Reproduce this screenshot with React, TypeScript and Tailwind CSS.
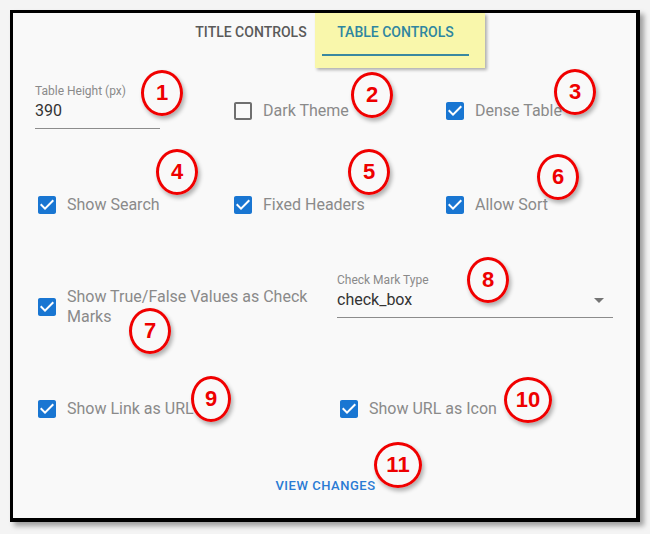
import React from "react";

const CHECKED =
  "M19 3H5c-1.11 0-2 .9-2 2v14c0 1.1.89 2 2 2h14c1.11 0 2-.9 2-2V5c0-1.1-.89-2-2-2zm-9 14l-5-5 1.41-1.41L10 14.17l7.59-7.59L19 8l-9 9z";
const UNCHECKED =
  "M19 5v14H5V5h14m0-2H5c-1.1 0-2 .9-2 2v14c0 1.1.9 2 2 2h14c1.1 0 2-.9 2-2V5c0-1.1-.9-2-2-2z";

function Box({ checked }: { checked: boolean }) {
  return (
    <svg width="24" height="24" viewBox="0 0 24 24" className="shrink-0">
      {checked && <rect x="5" y="5" width="14" height="14" fill="#ffffff" />}
      <path d={checked ? CHECKED : UNCHECKED} fill={checked ? "#1976d2" : "#6f6f6f"} />
    </svg>
  );
}

function Check({ label, checked = true, w }: { label: string; checked?: boolean; w: string }) {
  return (
    <div className={`flex items-center gap-[8px] ${w}`}>
      <Box checked={checked} />
      <span className="text-[16px] leading-[24px] text-[#8a8a8a]">{label}</span>
    </div>
  );
}

function Note({ n, x, y, w = 42 }: { n: string; x: number; y: number; w?: number }) {
  return (
    <div
      className="absolute flex items-center justify-center rounded-[50%] border-[3px] border-[#f00000] h-[46px] shadow-[2px_3px_4px_rgba(0,0,0,0.3)]"
      style={{ left: x - w / 2, top: y - 23, width: w }}
    >
      <span
        className="text-[22px] font-bold leading-none text-[#ee0000]"
        style={{ fontFamily: '"Liberation Sans", Arial, sans-serif' }}
      >
        {n}
      </span>
    </div>
  );
}

export default function App() {
  return (
    <div
      className="relative w-[650px] h-[534px] bg-[#f4f4f4] pt-[10px] pl-[10px] overflow-hidden"
      style={{ fontFamily: 'Roboto, "Liberation Sans", Arial, sans-serif' }}
    >
      <div className="relative w-[630px] h-[512px] bg-[#f9f9f9] border-t-[3px] border-l-[3px] border-r-[4px] border-b-[4px] border-black shadow-[4px_4px_5px_rgba(0,0,0,0.35)]">
        {/* yellow highlight behind active tab */}
        <div className="absolute left-[302px] top-0 w-[170px] h-[55px] bg-[#f9f7ab] shadow-[2px_2px_3px_rgba(0,0,0,0.3)]" />

        {/* tabs */}
        <div className="relative flex justify-center h-[43px]">
          <div className="flex flex-col items-center w-[142px] pt-[10px]">
            <span className="text-[14px] leading-[19px] font-medium text-[#5a5a5a]">
              TITLE CONTROLS
            </span>
          </div>
          <div className="flex flex-col items-center w-[147px] pt-[10px]">
            <span className="text-[14px] leading-[19px] font-medium text-[#2f86a0]">
              TABLE CONTROLS
            </span>
            <div className="flex-1" />
            <div className="h-[2px] w-full bg-[#3a88a0]" />
          </div>
        </div>

        <div className="pl-[22px]">
          {/* row 1 */}
          <div className="flex items-start mt-[27px]">
            <div className="w-[196px]">
              <div className="w-[125px]">
                <div className="text-[12px] leading-[16px] text-[#8a8a8a]">Table Height (px)</div>
                <div className="text-[16px] leading-[24px] text-[#333] pb-[5px] border-b border-[#8c8c8c]">390</div>
              </div>
            </div>
            <div className="mt-[16px] flex">
              <Check label="Dark Theme" checked={false} w="w-[212px]" />
              <Check label="Dense Table" w="w-[180px]" />
            </div>
          </div>

          {/* row 2 */}
          <div className="flex mt-[64px]">
            <Check label="Show Search" w="w-[196px]" />
            <Check label="Fixed Headers" w="w-[212px]" />
            <Check label="Allow Sort" w="w-[180px]" />
          </div>

          {/* row 3 */}
          <div className="flex items-start mt-[55px]">
            <div className="w-[302px] mt-[15px] flex items-center gap-[8px]">
              <Box checked />
              <span className="w-[250px] text-[16px] leading-[20px] text-[#8a8a8a]">
                Show True/False Values as Check Marks
              </span>
            </div>
            <div className="w-[276px]">
              <div className="text-[12px] leading-[16px] text-[#8a8a8a]">Check Mark Type</div>
              <div className="flex items-center justify-between pb-[5px] border-b border-[#8c8c8c]">
                <span className="text-[16px] leading-[22px] text-[#333]">check_box</span>
                <svg width="24" height="24" viewBox="0 0 24 24" className="mr-[2px]">
                  <path d="M7 10l5 5 5-5z" fill="#757575" />
                </svg>
              </div>
            </div>
          </div>

          {/* row 4 */}
          <div className="flex mt-[70px]">
            <Check label="Show Link as URL" w="w-[302px]" />
            <Check label="Show URL as Icon" w="w-[200px]" />
          </div>
        </div>

        {/* view changes */}
        <div className="flex justify-center mt-[55px] pl-[2px]">
          <span className="text-[13px] leading-[20px] font-medium tracking-[0.04em] text-[#2a7bd4]">
            VIEW CHANGES
          </span>
        </div>
      </div>

      {/* annotations */}
      <Note n="1" x={162} y={93} />
      <Note n="2" x={372} y={95} />
      <Note n="3" x={575} y={92} />
      <Note n="4" x={177} y={172} />
      <Note n="5" x={369} y={172} />
      <Note n="6" x={558} y={177} />
      <Note n="7" x={150} y={331} />
      <Note n="8" x={488} y={280} />
      <Note n="9" x={211} y={399} w={40} />
      <Note n="10" x={528} y={400} w={48} />
      <Note n="11" x={398} y={465} w={48} />
    </div>
  );
}
